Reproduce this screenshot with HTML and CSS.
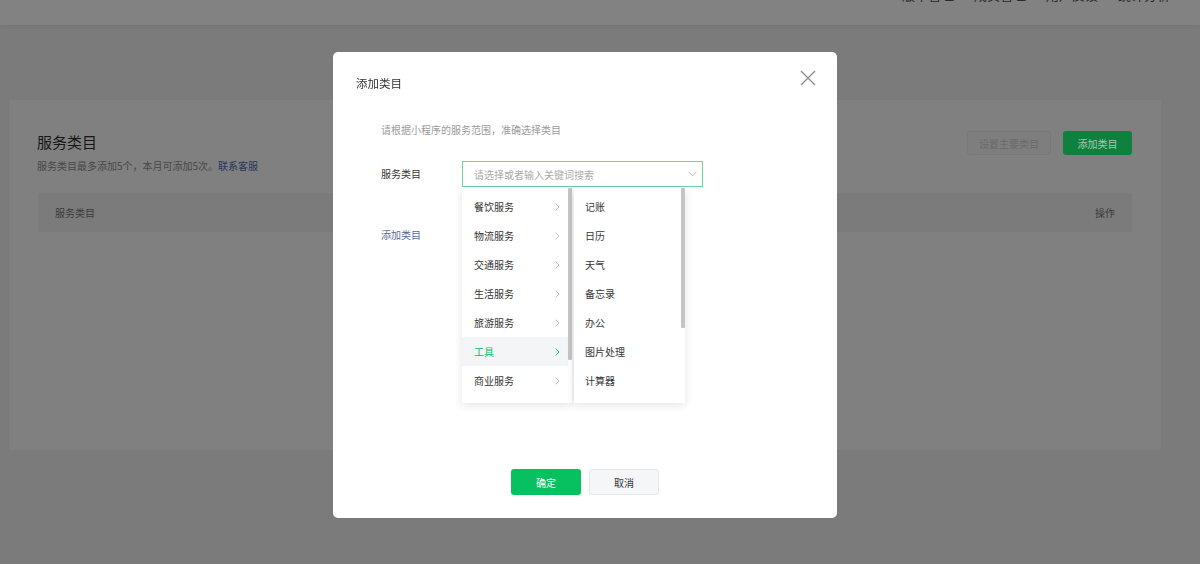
FILE: index.html
```html
<!DOCTYPE html>
<html lang="zh-CN">
<head>
<meta charset="utf-8">
<title>服务类目</title>
<link rel="stylesheet" href="styles.css">
</head>
<body>
<header class="topbar">
  <nav class="topnav">
    <a>版本管理</a>
    <a>成员管理</a>
    <a>用户反馈</a>
    <a>统计分析</a>
  </nav>
</header>

<main class="main">
  <section class="card">
    <div class="card-hd">
      <div class="card-info">
        <h2 class="card-title">服务类目</h2>
        <p class="card-desc">服务类目最多添加5个，本月可添加5次。<a class="card-link">联系客服</a></p>
      </div>
      <div class="card-actions">
        <button class="btn-ghost">设置主要类目</button>
        <button class="btn-dim-primary">添加类目</button>
      </div>
    </div>
    <div class="table-hd">
      <span>服务类目</span>
      <span>操作</span>
    </div>
  </section>
</main>

<div class="modal">
  <div class="modal-hd">
    <h3 class="modal-title">添加类目</h3>
    <button class="modal-close" aria-label="关闭">
      <svg width="16" height="16" viewBox="0 0 16 16"><path d="M1 1L15 15M15 1L1 15" stroke="#8a8a8a" stroke-width="1.3" fill="none"/></svg>
    </button>
  </div>
  <div class="modal-bd">
    <p class="tips">请根据小程序的服务范围，准确选择类目</p>
    <div class="form-row">
      <label class="form-label">服务类目</label>
      <div class="select">
        <div class="select-input">
          <span class="placeholder">请选择或者输入关键词搜索</span>
          <svg width="9" height="6" viewBox="0 0 9 6"><path d="M0.5 0.8L4.5 4.8L8.5 0.8" stroke="#b5b5b5" stroke-width="1" fill="none"/></svg>
        </div>
        <div class="cascader">
          <div class="panel panel-left">
            <ul class="opts">
              <li class="opt"><span>餐饮服务</span><svg class="arr" width="5" height="8" viewBox="0 0 5 8"><path d="M0.6 0.6L4 4L0.6 7.4" stroke="currentColor" fill="none"/></svg></li>
              <li class="opt"><span>物流服务</span><svg class="arr" width="5" height="8" viewBox="0 0 5 8"><path d="M0.6 0.6L4 4L0.6 7.4" stroke="currentColor" fill="none"/></svg></li>
              <li class="opt"><span>交通服务</span><svg class="arr" width="5" height="8" viewBox="0 0 5 8"><path d="M0.6 0.6L4 4L0.6 7.4" stroke="currentColor" fill="none"/></svg></li>
              <li class="opt"><span>生活服务</span><svg class="arr" width="5" height="8" viewBox="0 0 5 8"><path d="M0.6 0.6L4 4L0.6 7.4" stroke="currentColor" fill="none"/></svg></li>
              <li class="opt"><span>旅游服务</span><svg class="arr" width="5" height="8" viewBox="0 0 5 8"><path d="M0.6 0.6L4 4L0.6 7.4" stroke="currentColor" fill="none"/></svg></li>
              <li class="opt active"><span>工具</span><svg class="arr" width="5" height="8" viewBox="0 0 5 8"><path d="M0.6 0.6L4 4L0.6 7.4" stroke="currentColor" fill="none"/></svg></li>
              <li class="opt"><span>商业服务</span><svg class="arr" width="5" height="8" viewBox="0 0 5 8"><path d="M0.6 0.6L4 4L0.6 7.4" stroke="currentColor" fill="none"/></svg></li>
              <li class="opt"><span>医疗服务</span><svg class="arr" width="5" height="8" viewBox="0 0 5 8"><path d="M0.6 0.6L4 4L0.6 7.4" stroke="currentColor" fill="none"/></svg></li>
            </ul>
            <div class="thumb thumb-left"></div>
          </div>
          <div class="panel panel-right">
            <ul class="opts">
              <li class="opt"><span>记账</span></li>
              <li class="opt"><span>日历</span></li>
              <li class="opt"><span>天气</span></li>
              <li class="opt"><span>备忘录</span></li>
              <li class="opt"><span>办公</span></li>
              <li class="opt"><span>图片处理</span></li>
              <li class="opt"><span>计算器</span></li>
              <li class="opt"><span>信息查询</span></li>
            </ul>
            <div class="thumb thumb-right"></div>
          </div>
        </div>
      </div>
    </div>
    <a class="add-link">添加类目</a>
  </div>
  <div class="modal-ft">
    <button class="btn btn-primary">确定</button>
    <button class="btn btn-default">取消</button>
  </div>
</div>
</body>
</html>
```

FILE: styles.css
```css
* { box-sizing: border-box; }

html, body {
  margin: 0;
  padding: 0;
}

body {
  width: 1200px;
  height: 564px;
  overflow: hidden;
  background: #7b7b7b;
  font-family: "Noto Sans CJK SC", "Noto Sans", "Liberation Sans", sans-serif;
  color: #353535;
}

ul { margin: 0; padding: 0; list-style: none; }
p, h2, h3 { margin: 0; }
button { font-family: inherit; cursor: pointer; }

/* page (dimmed under mask) */
.topbar {
  height: 25px;
  background: #828282;
  box-shadow: 0 1px 4px rgba(0, 0, 0, 0.08);
  display: flex;
  justify-content: flex-end;
  overflow: hidden;
}

.topnav {
  display: flex;
  gap: 20px;
  margin-top: -13px;
  padding-right: 30px;
  height: 16px;
}

.topnav a {
  font-size: 13px;
  line-height: 16px;
  color: #2a2a2a;
}

.main {
  padding: 75px 0 0 9px;
}

.card {
  width: 1153px;
  height: 351px;
  background: #808080;
  border: 1px solid #7a7a7a;
  border-top: none;
  border-left: none;
  padding: 31px 29px 0 28px;
}

.card-hd {
  display: flex;
  justify-content: space-between;
  align-items: flex-start;
}

.card-title {
  font-size: 15px;
  line-height: 22px;
  font-weight: normal;
  color: #161616;
}

.card-desc {
  margin-top: 5px;
  font-size: 10px;
  line-height: 16px;
  color: #474747;
}

.card-link {
  color: #26365a;
}

.card-actions {
  display: flex;
  gap: 12px;
}

.btn-ghost {
  width: 84px;
  height: 24px;
  border: 1px solid #787878;
  border-radius: 3px;
  background: #7e7e7e;
  color: #6a6a6a;
  font-size: 10px;
  padding: 0;
}

.btn-dim-primary {
  width: 69px;
  height: 24px;
  border: none;
  border-radius: 3px;
  background: #0f813e;
  color: #a9c8b1;
  font-size: 10px;
  padding: 0;
}

.table-hd {
  margin: 19px 0 0 1px;
  height: 39px;
  background: #7b7b7b;
  display: flex;
  justify-content: space-between;
  align-items: center;
  padding: 0 17px;
  font-size: 10px;
  color: #3a3a3a;
}

/* modal */
.modal {
  position: fixed;
  left: 333px;
  top: 52px;
  width: 504px;
  height: 466px;
  background: #fff;
  border-radius: 5px;
  display: flex;
  flex-direction: column;
}

.modal-hd {
  position: relative;
  padding: 21px 23px 0;
}

.modal-title {
  font-size: 11.5px;
  line-height: 20px;
  font-weight: normal;
  color: #333;
}

.modal-close {
  position: absolute;
  top: 18px;
  right: 21px;
  width: 16px;
  height: 16px;
  padding: 0;
  border: none;
  background: none;
  display: flex;
}

.modal-bd {
  padding: 0 48px;
}

.tips {
  margin-top: 28px;
  font-size: 10px;
  line-height: 18px;
  color: #9b9b9b;
}

.form-row {
  margin-top: 22px;
  display: flex;
}

.form-label {
  width: 81px;
  font-size: 10px;
  line-height: 25px;
  color: #353535;
}

.select {
  position: relative;
  width: 241px;
}

.select-input {
  height: 26px;
  border: 1px solid #6ed5a1;
  display: flex;
  align-items: center;
  justify-content: space-between;
  padding: 0 5px 0 11px;
}

.placeholder {
  font-size: 10px;
  color: #ababab;
}

.cascader {
  position: absolute;
  top: 27px;
  left: 0;
  display: flex;
  gap: 2px;
  z-index: 2;
}

.panel {
  position: relative;
  height: 215px;
  background: #fff;
  box-shadow: 0 2px 9px rgba(0, 0, 0, 0.11);
  overflow: hidden;
}

.panel-left { width: 110px; }
.panel-right { width: 111px; }

.opts {
  padding: 4px 0;
  margin-right: 4px;
}

.opt {
  height: 29px;
  display: flex;
  align-items: center;
  justify-content: space-between;
  font-size: 10px;
  color: #353535;
}

.panel-left .opt {
  padding: 0 8px 0 12px;
}

.panel-right .opt {
  padding: 0 8px 0 11px;
}

.arr {
  color: #bcbcbc;
}

.opt.active {
  background: #f4f5f6;
  color: #07c160;
}

.opt.active .arr {
  color: #07c160;
}

.thumb {
  position: absolute;
  top: 0;
  right: 0;
  width: 4px;
  background: #c5c5c5;
  border-radius: 1px;
}

.thumb-left { height: 172px; }
.thumb-right { height: 140px; }

.add-link {
  display: block;
  margin-top: 39px;
  font-size: 10px;
  line-height: 18px;
  color: #576b95;
  width: fit-content;
}

.modal-ft {
  margin-top: auto;
  padding-bottom: 23px;
  display: flex;
  justify-content: center;
  gap: 8px;
}

.btn {
  width: 70px;
  height: 26px;
  border-radius: 3px;
  font-size: 10px;
  padding: 0;
}

.btn-primary {
  background: #07c160;
  border: none;
  color: #fff;
}

.btn-default {
  background: #f5f6f7;
  border: 1px solid #e6e7e8;
  color: #353535;
}
```
